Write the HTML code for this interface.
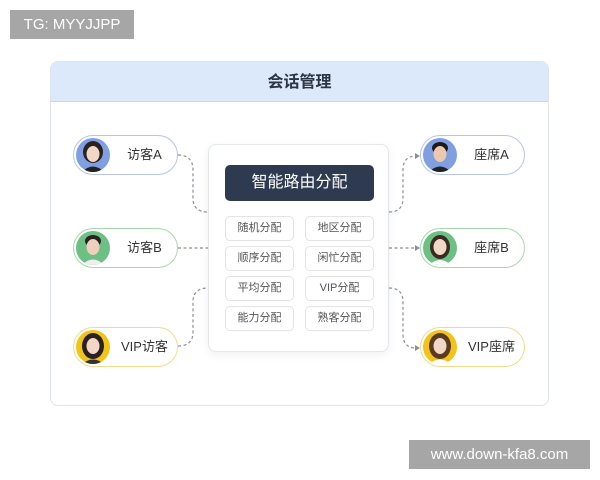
<!DOCTYPE html>
<html><head><meta charset="utf-8"><style>
*{margin:0;padding:0;box-sizing:border-box}
body{width:600px;height:480px;background:#fff;position:relative;overflow:hidden;font-family:"Liberation Sans","Noto Sans CJK SC",sans-serif}
.abs{position:absolute}
.wm{position:absolute;background:#a6a6a6;color:#fff;font-size:15px;line-height:29px;text-align:center}
.card{left:50px;top:61px;width:499px;height:345px;border:1px solid #dfe3ea;border-radius:8px;overflow:hidden;background:#fff}
.hdr{left:0;top:0;width:100%;height:40px;background:#dce9fb;border-bottom:1px solid #c9d8ee;text-align:center;line-height:42px;font-size:16px;font-weight:bold;color:#2c3442}
.pill{position:absolute;width:105px;height:40px;border-radius:20px;background:#fff;border:1.5px solid #b9c6e3;font-size:13px;color:#333}
.pill .av{position:absolute;left:2px;top:2px;width:34px;height:34px;border-radius:50%;overflow:hidden}
.pill span{position:absolute;left:38px;right:0;top:0;line-height:37px;text-align:center}
.box{left:208px;top:144px;width:181px;height:208px;border:1px solid #e3e6ec;border-radius:8px;background:#fff;box-shadow:0 3px 10px rgba(0,0,0,.06)}
.bar{left:225px;top:165px;width:149px;height:36px;background:#2e3a50;border-radius:5px;color:#fff;font-size:16px;text-align:center;line-height:36px}
.chip{position:absolute;width:69px;height:25px;border:1px solid #e1e3e8;border-radius:5px;font-size:11px;color:#555;text-align:center;line-height:23px;background:#fff}
</style></head><body>
<div class="wm" style="left:10px;top:10px;width:124px">TG: MYYJJPP</div>
<div class="wm" style="left:409px;top:440px;width:181px">www.down-kfa8.com</div>
<div class="abs card"><div class="abs hdr">会话管理</div></div>
<svg class="abs" style="left:0;top:0" width="600" height="480">
<g fill="none" stroke="#8a8f99" stroke-width="1.2" stroke-dasharray="3,2.5">
<path d="M178 155 Q193 155 193 170 L193 198 Q193 212 208 212"/>
<path d="M178 248 L208 248"/>
<path d="M178 346 Q193 346 193 332 L193 302 Q193 288 208 288"/>
<path d="M389 212 Q403 212 403 198 L403 170 Q403 156 416 156"/>
<path d="M389 248 L416 248"/>
<path d="M389 288 Q403 288 403 302 L403 334 Q403 348 416 348"/>
</g>
<g fill="#8a8f99"><path d="M420 156 l-5 -3 v6z"/><path d="M420 248 l-5 -3 v6z"/><path d="M420 348 l-5 -3 v6z"/></g>
</svg>
<div class="abs box"></div>
<div class="abs bar">智能路由分配</div>
<div class="chip" style="left:225px;top:216px">随机分配</div><div class="chip" style="left:305px;top:216px">地区分配</div>
<div class="chip" style="left:225px;top:246px">顺序分配</div><div class="chip" style="left:305px;top:246px">闲忙分配</div>
<div class="chip" style="left:225px;top:276px">平均分配</div><div class="chip" style="left:305px;top:276px">VIP分配</div>
<div class="chip" style="left:225px;top:306px">能力分配</div><div class="chip" style="left:305px;top:306px">熟客分配</div>

<div class="pill" style="left:73px;top:135px;border-color:#b8c4e4"><div class="av" style="background:#7f9fe0"><svg width="34" height="34"><ellipse cx="17" cy="14" rx="10" ry="11" fill="#2a2220"/><ellipse cx="17" cy="16" rx="6.5" ry="8" fill="#f2d6c6"/><path d="M6 34 Q17 23 28 34z" fill="#222"/></svg></div><span>访客A</span></div>
<div class="pill" style="left:73px;top:228px;border-color:#a6d8ac"><div class="av" style="background:#6cc083"><svg width="34" height="34"><ellipse cx="17" cy="10" rx="8" ry="6" fill="#2a2220"/><ellipse cx="17" cy="16" rx="6.5" ry="8" fill="#efcfbd"/><path d="M6 34 Q17 23 28 34z" fill="#eee"/></svg></div><span>访客B</span></div>
<div class="pill" style="left:73px;top:327px;border-color:#eedc8c"><div class="av" style="background:#f2c318"><svg width="34" height="34"><ellipse cx="17" cy="16" rx="11" ry="13" fill="#2a2220"/><ellipse cx="17" cy="16" rx="6.5" ry="8" fill="#f3d7c5"/><path d="M6 34 Q17 25 28 34z" fill="#333"/></svg></div><span>VIP访客</span></div>

<div class="pill" style="left:420px;top:135px;border-color:#b8c4e4"><div class="av" style="background:#7f9fe0"><svg width="34" height="34"><ellipse cx="17" cy="10" rx="8" ry="6" fill="#1e1a1a"/><ellipse cx="17" cy="16" rx="6.5" ry="8" fill="#ecc8b0"/><path d="M6 34 Q17 23 28 34z" fill="#222"/></svg></div><span>座席A</span></div>
<div class="pill" style="left:420px;top:228px;border-color:#a6d8ac"><div class="av" style="background:#6cc083"><svg width="34" height="34"><ellipse cx="17" cy="16" rx="10" ry="12" fill="#3a2a22"/><ellipse cx="17" cy="16" rx="6.5" ry="8" fill="#f3d7c5"/><path d="M6 34 Q17 24 28 34z" fill="#fff"/></svg></div><span>座席B</span></div>
<div class="pill" style="left:420px;top:327px;border-color:#eedc8c"><div class="av" style="background:#f2c318"><svg width="34" height="34"><ellipse cx="17" cy="16" rx="11" ry="13" fill="#5a3a22"/><ellipse cx="17" cy="16" rx="6.5" ry="8" fill="#f3d7c5"/><path d="M6 34 Q17 25 28 34z" fill="#fff"/></svg></div><span>VIP座席</span></div>
</body></html>
